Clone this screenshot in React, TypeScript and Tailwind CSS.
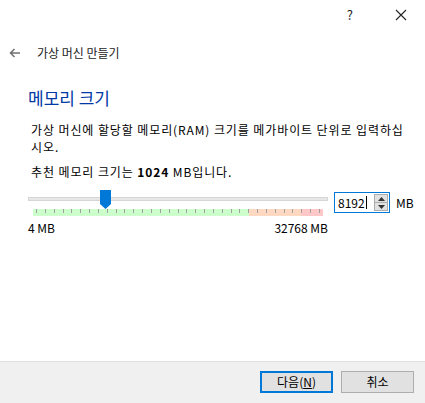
import React from "react";

const font = { fontFamily: '"Noto Sans CJK KR", "Liberation Sans", sans-serif' };

const Ticks = () => {
  const ticks = Array.from({ length: 33 });
  return (
    <div className="flex h-[7px] w-[290px] ml-[5px] relative">
      <div className="h-full w-[216px] bg-[#ccffcc]" />
      <div className="h-full w-[52px] bg-[#ffd8c2]" />
      <div className="h-full w-[22px] bg-[#ffc8c8]" />
      <div className="absolute inset-0 flex justify-between px-[3px]">
        {ticks.map((_, i) => (
          <div key={i} className="w-px h-[4px] bg-[#a0a0a0]" />
        ))}
      </div>
    </div>
  );
};

const Thumb = () => (
  <svg width="11" height="19" viewBox="0 0 11 19" className="absolute left-[72px] top-0">
    <path d="M0 0 H11 V14 L5.5 19 L0 14 Z" fill="#0078d7" />
  </svg>
);

const SpinBox = () => (
  <div className="ml-[6px] flex h-[21px] w-[56px] items-center border border-[#0078d7] bg-white pl-[3px] pr-[1px]">
    <span className="text-[12px] leading-none text-black">8192</span>
    <span className="ml-px h-[13px] w-px bg-black" />
    <div className="ml-auto flex h-[17px] w-[14px] flex-col border border-[#adadad] bg-[#e1e1e1]">
      <div className="flex flex-1 items-center justify-center">
        <svg width="7" height="4" viewBox="0 0 7 4">
          <path d="M0 4 L3.5 0 L7 4 Z" fill="#333" />
        </svg>
      </div>
      <div className="h-px bg-[#adadad]" />
      <div className="flex flex-1 items-center justify-center">
        <svg width="7" height="4" viewBox="0 0 7 4">
          <path d="M0 0 L3.5 4 L7 0 Z" fill="#333" />
        </svg>
      </div>
    </div>
  </div>
);

const App = () => {
  return (
    <div className="flex h-[403px] w-[425px] flex-col bg-white text-black" style={font}>
      <div className="flex h-[30px] items-center justify-end">
        <span className="mr-[42px] text-[13px] text-[#222]">?</span>
        <svg width="12" height="12" viewBox="0 0 12 12" className="mr-[18px]">
          <path d="M1 1 L11 11 M11 1 L1 11" stroke="#222" strokeWidth="1.1" />
        </svg>
      </div>

      <div className="mt-[13px] flex h-[20px] items-center">
        <svg width="12" height="10" viewBox="0 0 12 10" className="ml-[9px]">
          <path d="M11 5 H1.5 M5.5 1 L1.5 5 L5.5 9" stroke="#707070" strokeWidth="1.5" fill="none" />
        </svg>
        <span className="ml-[16px] text-[12px] text-[#222]">가상 머신 만들기</span>
      </div>

      <div className="ml-[28px] mt-[24px] h-[22px] text-[17px] leading-[22px] text-[#0039a6]">메모리 크기</div>

      <p className="ml-[31px] mt-[12px] whitespace-nowrap text-[12px] leading-[17px] tracking-[0.9px]">
        가상 머신에 할당할 메모리(RAM) 크기를 메가바이트 단위로 입력하십
        <br />
        시오.
      </p>

      <p className="ml-[31px] mt-[8px] text-[12px] leading-[17px] tracking-[0.9px]">
        추천 메모리 크기는 <b>1024</b> MB입니다.
      </p>

      <div className="ml-[28px] mt-[10px] flex items-start">
        <div className="w-[300px]">
          <div className="relative h-[19px]">
            <div className="absolute left-0 right-0 top-[7px] h-[4px] border border-[#d6d6d6] bg-[#e7e7e7]" />
            <Thumb />
          </div>
          <Ticks />
          <div className="mt-[3px] flex justify-between text-[12px] leading-[17px]">
            <span>4 MB</span>
            <span>32768 MB</span>
          </div>
        </div>
        <div className="mt-[2px] flex items-center">
          <SpinBox />
          <span className="ml-[6px] text-[12px]">MB</span>
        </div>
      </div>

      <div className="flex-1" />

      <div className="flex h-[42px] justify-end border-t border-[#dfdfdf] bg-[#f0f0f0] pr-[11px] pt-[9px]">
        <button className="flex h-[22px] w-[73px] items-center justify-center border-2 border-[#0078d7] bg-[#e1e1e1] text-[12px]">
          다음(<span className="underline">N</span>)
        </button>
        <button className="ml-[8px] flex h-[22px] w-[73px] items-center justify-center border border-[#adadad] bg-[#e1e1e1] text-[12px]">
          취소
        </button>
      </div>
    </div>
  );
};

export default App;
